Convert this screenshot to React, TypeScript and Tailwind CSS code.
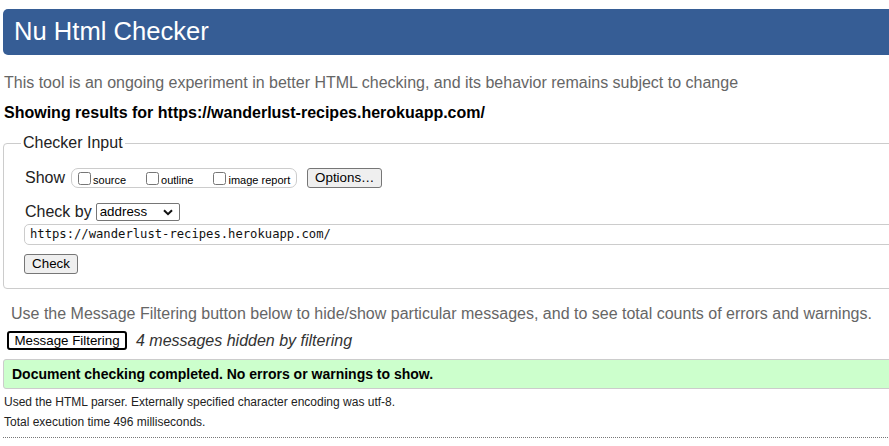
export default function App() {
  return (
    <div className="w-full h-[446px] overflow-hidden bg-white">
      <div className="w-[920px] pl-[3px] pt-[9px] font-['Liberation_Sans',Arial,sans-serif] text-[16px] text-black">
        <header className="h-[46px] flex items-center pl-[11px] bg-[#365d95] rounded-l-[5px] text-white text-[25.6px] leading-none">
          Nu Html Checker
        </header>
        <p className="mt-[18px] ml-[1px] leading-[20px] text-[#666]">
          This tool is an ongoing experiment in better HTML checking, and its behavior remains subject to change
        </p>
        <p className="mt-[10px] ml-[1px] leading-[20px] font-bold">
          Showing results for https://wanderlust-recipes.herokuapp.com/
        </p>
        <fieldset className="mt-[10px] border border-[#ccc] rounded-[4px] px-[20px] pb-[14px]">
          <legend className="ml-[-3px] px-[2px] leading-[20px] text-[#222]">Checker Input</legend>
          <div className="mt-[15px] flex items-center h-[20px]">
            <span className="ml-[1px] leading-[20px] text-[#222]">Show</span>
            <div className="ml-[6px] h-[20px] flex items-center gap-[20px] border border-[#ccc] rounded-[7px] pl-[6px] pr-[6px]">
              <label className="flex items-center">
                <input type="checkbox" className="w-[13px] h-[13px]" />
                <span className="ml-[2px] mt-[4px] text-[11px] leading-[11px]">source</span>
              </label>
              <label className="flex items-center">
                <input type="checkbox" className="w-[13px] h-[13px]" />
                <span className="ml-[2px] mt-[4px] text-[11px] leading-[11px]">outline</span>
              </label>
              <label className="flex items-center">
                <input type="checkbox" className="w-[13px] h-[13px]" />
                <span className="ml-[2px] mt-[4px] text-[11px] leading-[11px]">image report</span>
              </label>
            </div>
            <button className="ml-[10px] h-[20px] w-[75px] flex items-center justify-center bg-[#efefef] border border-[#767676] rounded-[3px] text-[13.33px] text-black">
              Options…
            </button>
          </div>
          <div className="mt-[15px] flex items-center h-[18px]">
            <span className="ml-[1px] leading-[20px] text-[#222]">Check by</span>
            <div className="ml-[4px] w-[84px] h-[18px] flex items-center justify-between border border-[#767676] rounded-[2px] pl-[3px] pr-[6px] text-[13.33px]">
              <span>address</span>
              <svg width="10" height="7" viewBox="0 0 10 7" fill="none">
                <path d="M1 1.2 L5 5.2 L9 1.2" stroke="#111" strokeWidth="2" />
              </svg>
            </div>
          </div>
          <div className="mt-[3px] h-[21px] flex items-center border border-[#ccc] rounded-[5px] pl-[5px] font-['DejaVu_Sans_Mono',monospace] text-[12.2px] text-[#111]">
            https://wanderlust-recipes.herokuapp.com/
          </div>
          <button className="mt-[9px] h-[20px] w-[54px] flex items-center justify-center bg-[#efefef] border border-[#767676] rounded-[3px] text-[13.33px] text-black">
            Check
          </button>
        </fieldset>
        <p className="mt-[15px] ml-[8px] leading-[20px] text-[#666]">
          Use the Message Filtering button below to hide/show particular messages, and to see total counts of errors and warnings.
        </p>
        <div className="mt-[7px] h-[19px] flex items-center">
          <button className="ml-[4px] h-[19px] w-[120px] flex items-center justify-center bg-white border-2 border-black rounded-[3px] text-[13.33px] text-black">
            Message Filtering
          </button>
          <span className="ml-[9px] italic leading-[20px] text-[#333]">4 messages hidden by filtering</span>
        </div>
        <div className="mt-[9px] h-[30px] flex items-center border border-[#ccc] bg-[#ccffcc] rounded-[3px] pl-[8px] text-[14px] font-bold">
          Document checking completed. No errors or warnings to show.
        </div>
        <p className="mt-[4px] ml-[1px] text-[12px] leading-[19px] text-[#222]">
          Used the HTML parser. Externally specified character encoding was utf-8.
        </p>
        <p className="mt-[1px] ml-[1px] text-[12px] leading-[19px] text-[#222]">Total execution time 496 milliseconds.</p>
        <div className="mt-[5px] border-t border-dotted border-[#777]" />
      </div>
    </div>
  );
}
